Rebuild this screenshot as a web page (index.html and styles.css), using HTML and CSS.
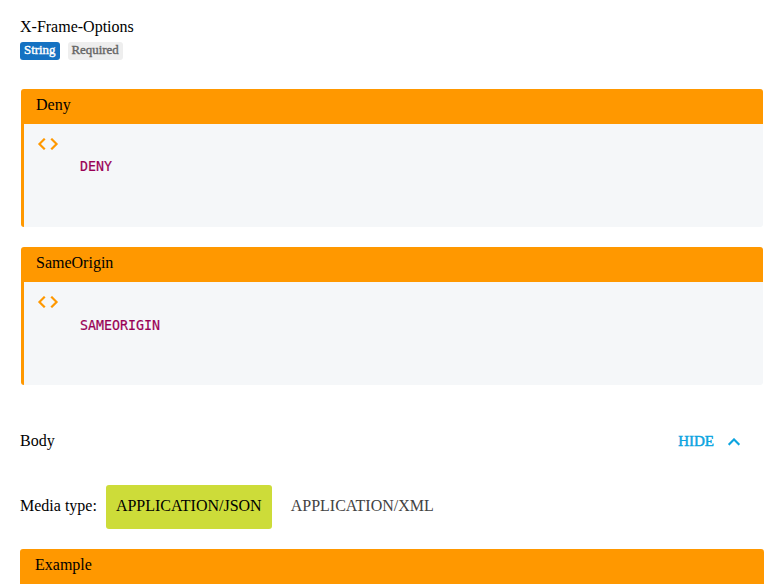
FILE: index.html
```html
<!DOCTYPE html>
<html lang="en">
<head>
<meta charset="utf-8">
<title>X-Frame-Options</title>
<link rel="stylesheet" href="styles.css">
</head>
<body>
<main class="doc">
  <div class="name">X-Frame-Options</div>
  <div class="tags"><span class="tag type">String</span><span class="tag">Required</span></div>
  <section class="example">
    <div class="title">Deny</div>
    <div class="content">
      <svg class="code-icon" viewBox="0 0 24 24"><path d="M9.4 16.6L4.8 12l4.6-4.6L8 6l-6 6 6 6 1.4-1.4zm5.2 0l4.6-4.6-4.6-4.6L16 6l6 6-6 6-1.4-1.4z"/></svg>
      <code>DENY</code>
    </div>
  </section>
  <section class="example">
    <div class="title">SameOrigin</div>
    <div class="content">
      <svg class="code-icon" viewBox="0 0 24 24"><path d="M9.4 16.6L4.8 12l4.6-4.6L8 6l-6 6 6 6 1.4-1.4zm5.2 0l4.6-4.6-4.6-4.6L16 6l6 6-6 6-1.4-1.4z"/></svg>
      <code>SAMEORIGIN</code>
    </div>
  </section>
  <div class="body-head">
    <span>Body</span>
    <span class="toggle"><span class="toggle-label">Hide</span><svg viewBox="0 0 24 24"><path d="M12 8l-6 6 1.41 1.41L12 10.83l4.59 4.58L18 14z"/></svg></span>
  </div>
  <div class="media"><span class="label">Media type:</span><button class="active">application/json</button><button>application/xml</button></div>
  <section class="last"><div class="title">Example</div></section>
</main>
</body>
</html>
```
FILE: styles.css
```css
* { box-sizing: border-box; }
body {
  margin: 0;
  height: 584px;
  overflow: hidden;
  background: #fff;
  color: #000;
  font: 16px/20px "Liberation Serif", serif;
}
.doc { padding: 17px 20px 0; }
.tags {
  display: flex;
  gap: 8px;
  margin-top: 5px;
}
.tag {
  height: 18px;
  padding: 0 4px;
  border-radius: 3px;
  background: #eee;
  color: #666;
  font-size: 12.9px;
  line-height: 17px;
  -webkit-text-stroke: 0.4px;
}
.type { background: #1572c2; color: #fff; }
.example {
  margin: 29px 1px 0;
  height: 138px;
  border-left: 3px solid #ff9800;
  border-radius: 3px;
  background: #f5f7f9;
  overflow: hidden;
}
.example + .example { margin-top: 20px; }
.title {
  height: 35px;
  padding: 6px 12px;
  background: #ff9800;
}
.content { display: flex; padding: 8px 12px; }
.code-icon {
  width: 24px;
  height: 24px;
  fill: #ff9800;
  stroke: #ff9800;
  stroke-width: 0.2;
}
code {
  margin: 25px 0 0 20px;
  color: #905;
  font: 13.3px/20px "DejaVu Sans Mono", monospace;
  -webkit-text-stroke: 0.2px;
}
.example + .example code { margin-top: 26px; }
.body-head {
  display: flex;
  justify-content: space-between;
  height: 24px;
  margin-top: 45px;
  padding-right: 18px;
  line-height: 22px;
}
.toggle {
  display: flex;
  align-items: center;
  color: #0ca4df;
  font-size: 15px;
  text-transform: uppercase;
  -webkit-text-stroke: 0.5px;
}
.toggle-label { padding-bottom: 2px; }
.toggle svg {
  width: 24px;
  height: 24px;
  margin-left: 8px;
  fill: currentColor;
  stroke: currentColor;
  stroke-width: 0.2;
}
.media {
  display: flex;
  height: 44px;
  margin-top: 31px;
  line-height: 42px;
}
button {
  height: 44px;
  margin-left: 9px;
  padding: 0 10px 2px;
  border: 0;
  border-radius: 3px;
  background: transparent;
  color: #424242;
  font: inherit;
  text-transform: uppercase;
}
.active { background: #cddc39; color: #000; }
.last {
  margin-top: 20px;
  border-radius: 3px;
  overflow: hidden;
}
.last .title { padding-left: 15px; height: 60px; }
```
